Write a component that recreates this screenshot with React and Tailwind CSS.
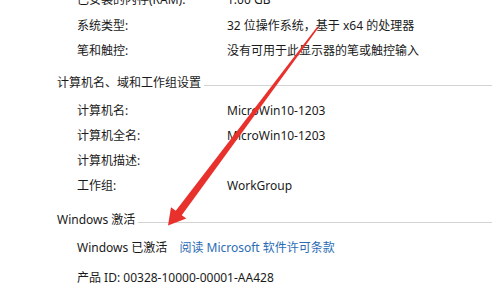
import React from 'react';

const font = { fontFamily: '"Noto Sans", "Noto Sans CJK SC", sans-serif' };

function Row({ label, value }) {
  return (
    <div className="flex h-[25px] items-center">
      <div className="w-[150px] pl-[77px] whitespace-nowrap">{label}</div>
      <div className="pl-[77px] whitespace-nowrap">{value}</div>
    </div>
  );
}

function Heading({ children, className }) {
  return (
    <div className={`flex h-[25px] items-center pl-[57px] ${className}`}>
      <span className="whitespace-nowrap">{children}</span>
      <div className="ml-[3px] mt-[6px] h-px flex-1 bg-[#d3d3d3]" />
    </div>
  );
}

// red annotation arrow drawn on top of the panel
function Arrow() {
  return (
    <svg className="pointer-events-none absolute left-0 top-0" width="492" height="305" viewBox="0 0 492 305">
      <polygon points="318.6,27.5 317.4,26.5 175,211.8 181,216.2" fill="#e8312c" />
      <polygon points="168,225.5 171,207.2 186.3,218.6" fill="#e8312c" />
    </svg>
  );
}

export default function App() {
  return (
    <div className="relative h-[305px] w-[492px] overflow-hidden bg-white text-[12px] text-[#1a1a1a]" style={font}>
      <div className="-mt-[13px]">
        <Row label="已安装的内存(RAM):" value="1.00 GB" />
        <div className="mt-[1px]">
          <Row label="系统类型:" value="32 位操作系统，基于 x64 的处理器" />
          <Row label="笔和触控:" value="没有可用于此显示器的笔或触控输入" />
        </div>

        <Heading className="mt-[7px]">计算机名、域和工作组设置</Heading>
        <div className="mt-[3px]">
          <Row label="计算机名:" value="MicroWin10-1203" />
          <Row label="计算机全名:" value="MicroWin10-1203" />
          <Row label="计算机描述:" value="" />
          <Row label="工作组:" value="WorkGroup" />
        </div>

        <Heading className="mt-[9px]">Windows 激活</Heading>
        <div className="mt-[3px] flex h-[25px] items-center gap-[12px] pl-[77px] whitespace-nowrap">
          <span>Windows 已激活</span>
          <span className="text-[#2b6cb5]">阅读 Microsoft 软件许可条款</span>
        </div>
        <div className="mt-[5px] flex h-[25px] items-center pl-[77px] whitespace-nowrap">
          产品 ID: 00328-10000-00001-AA428
        </div>
      </div>
      <Arrow />
    </div>
  );
}
